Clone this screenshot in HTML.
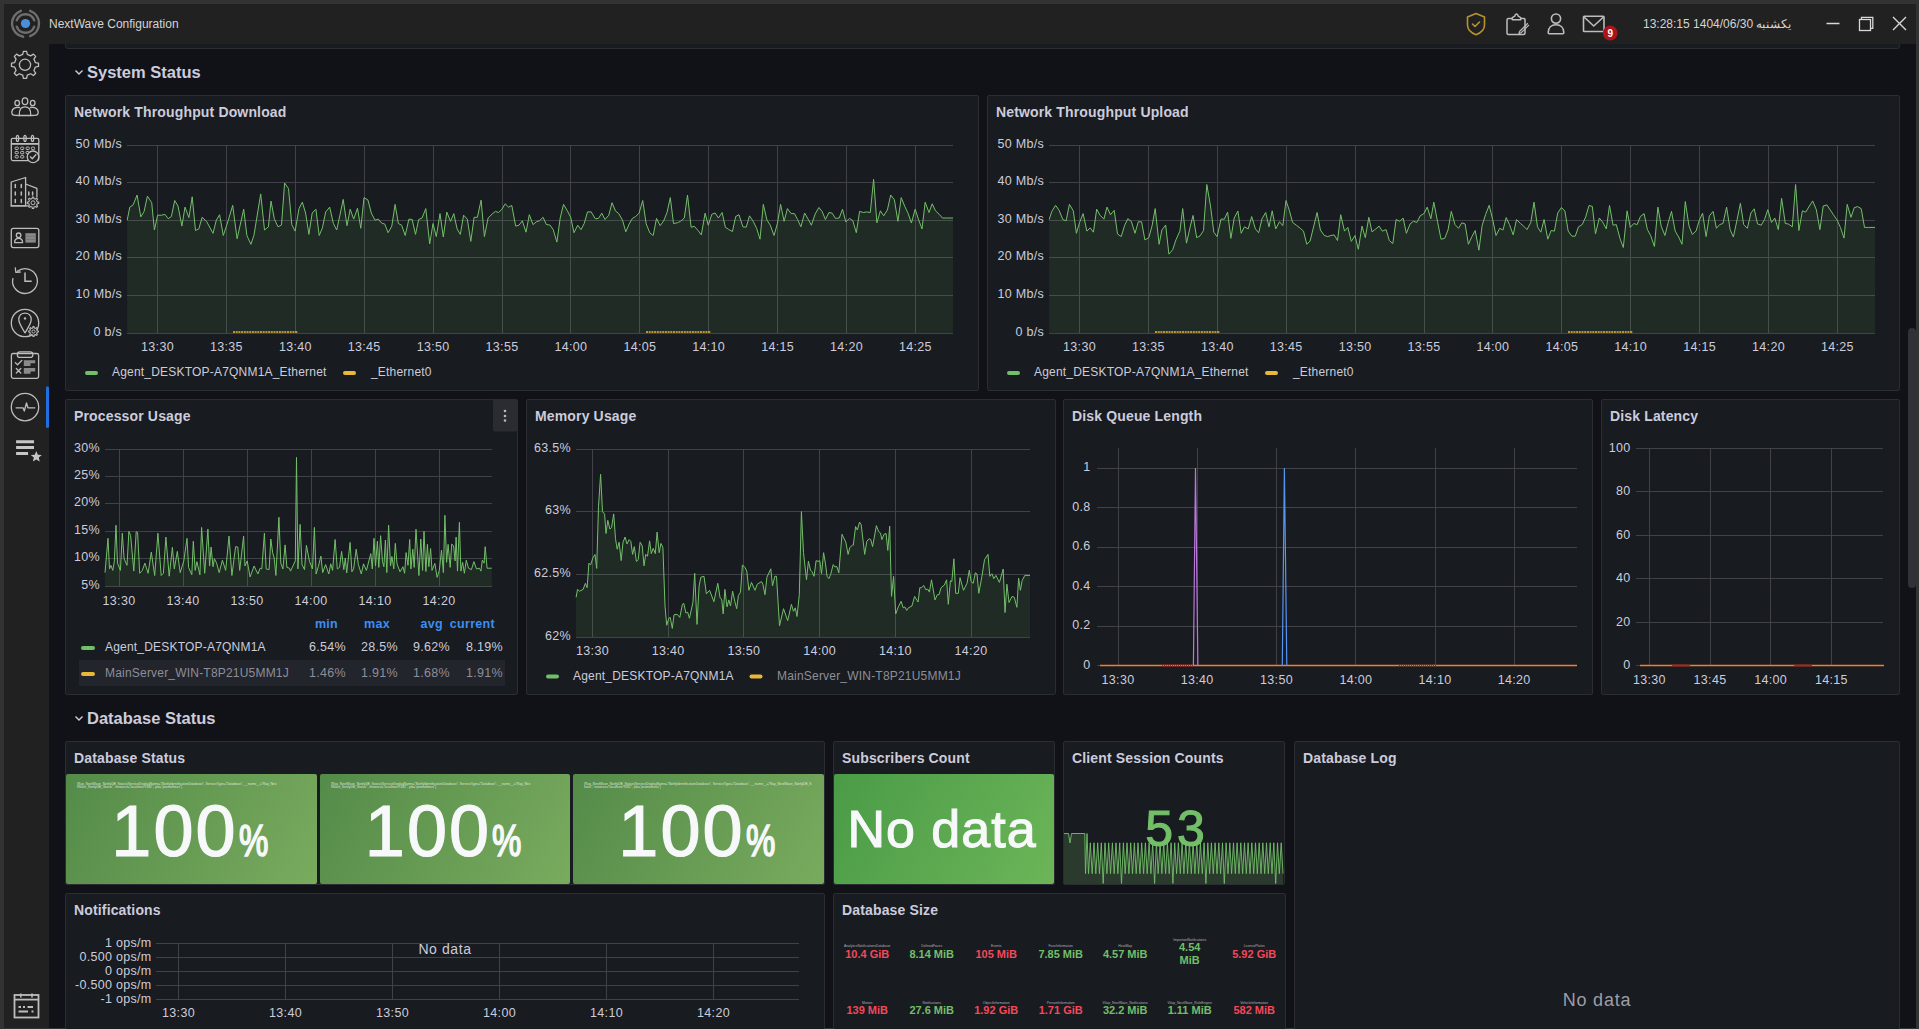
<!DOCTYPE html><html><head><meta charset="utf-8"><style>
html,body{margin:0;padding:0;}
body{width:1919px;height:1029px;overflow:hidden;background:#333333;position:relative;font-family:"Liberation Sans", sans-serif;}
.a{position:absolute;}
.pn{position:absolute;box-sizing:border-box;background:#181b1f;border:1px solid #2b2d32;border-radius:2px;}
.pt{position:absolute;font-size:14px;font-weight:bold;color:#ccccdc;line-height:18px;white-space:nowrap;letter-spacing:0.15px}
svg{position:absolute;overflow:visible}
svg text{font-family:"Liberation Sans", sans-serif;}
</style></head><body>

<div class="a" style="left:4px;top:4px;width:1912px;height:40px;background:#212121"></div>
<div class="a" style="left:4px;top:44px;width:45px;height:984px;background:#212121"></div>
<div class="a" style="left:49px;top:44px;width:1867px;height:984px;background:#111217"></div>
<div class="pn" style="left:65px;top:20px;width:1835px;height:29px;border-radius:3px"></div>
<div class="a" style="left:49px;top:4px;width:1867px;height:40px;background:#212121"></div>
<div class="a" style="left:1908px;top:328px;width:8px;height:260px;background:#313237;border-radius:4px"></div>
<div class="a" style="left:49px;top:16px;font-size:12px;color:#d4d4d4;line-height:16px">NextWave Configuration</div>
<svg style="left:0;top:0" width="1919" height="1029" viewBox="0 0 1919 1029"><path d="M75.5 70.5 L79 74 L82.5 70.5" stroke="#ccccdc" stroke-width="1.4" fill="none"/></svg>
<div class="a" style="left:87px;top:62px;font-size:16.5px;font-weight:bold;color:#ccccdc;line-height:20px">System Status</div>
<svg style="left:0;top:0" width="1919" height="1029" viewBox="0 0 1919 1029"><path d="M75.5 716.5 L79 720 L82.5 716.5" stroke="#ccccdc" stroke-width="1.4" fill="none"/></svg>
<div class="a" style="left:87px;top:708px;font-size:16.5px;font-weight:bold;color:#ccccdc;line-height:20px">Database Status</div>
<div class="pn" style="left:65px;top:95px;width:914px;height:296px"></div>
<div class="pt" style="left:74px;top:103px">Network Throughput Download</div>
<div class="pn" style="left:987px;top:95px;width:913px;height:296px"></div>
<div class="pt" style="left:996px;top:103px">Network Throughput Upload</div>
<div class="pn" style="left:65px;top:399px;width:453px;height:296px"></div>
<div class="pt" style="left:74px;top:407px">Processor Usage</div>
<div class="pn" style="left:526px;top:399px;width:530px;height:296px"></div>
<div class="pt" style="left:535px;top:407px">Memory Usage</div>
<div class="pn" style="left:1063px;top:399px;width:530px;height:296px"></div>
<div class="pt" style="left:1072px;top:407px">Disk Queue Length</div>
<div class="pn" style="left:1601px;top:399px;width:299px;height:296px"></div>
<div class="pt" style="left:1610px;top:407px">Disk Latency</div>
<div class="pn" style="left:65px;top:741px;width:760px;height:144px"></div>
<div class="pt" style="left:74px;top:749px">Database Status</div>
<div class="pn" style="left:833px;top:741px;width:222px;height:144px"></div>
<div class="pt" style="left:842px;top:749px">Subscribers Count</div>
<div class="pn" style="left:1063px;top:741px;width:222px;height:144px"></div>
<div class="pt" style="left:1072px;top:749px">Client Session Counts</div>
<div class="pn" style="left:1294px;top:741px;width:606px;height:299px"></div>
<div class="pt" style="left:1303px;top:749px">Database Log</div>
<div class="pn" style="left:65px;top:893px;width:760px;height:147px"></div>
<div class="pt" style="left:74px;top:901px">Notifications</div>
<div class="pn" style="left:833px;top:893px;width:453px;height:147px"></div>
<div class="pt" style="left:842px;top:901px">Database Size</div>
<svg style="left:0;top:0" width="1919" height="1029" viewBox="0 0 1919 1029">
<path d="M127 145.5H953M127 182.5H953M127 220.5H953M127 257.5H953M127 295.5H953M127 333.5H953M157.5 145V333M226.5 145V333M295.5 145V333M364.5 145V333M433.5 145V333M502.5 145V333M570.5 145V333M639.5 145V333M708.5 145V333M777.5 145V333M846.5 145V333M915.5 145V333" stroke="#404247" stroke-width="1" fill="none"/>
<text x="122" y="148.4" font-size="12.5" text-anchor="end" fill="#ccccdc" font-weight="normal" letter-spacing="0.3">50 Mb/s</text>
<text x="122" y="185.4" font-size="12.5" text-anchor="end" fill="#ccccdc" font-weight="normal" letter-spacing="0.3">40 Mb/s</text>
<text x="122" y="223.4" font-size="12.5" text-anchor="end" fill="#ccccdc" font-weight="normal" letter-spacing="0.3">30 Mb/s</text>
<text x="122" y="260.4" font-size="12.5" text-anchor="end" fill="#ccccdc" font-weight="normal" letter-spacing="0.3">20 Mb/s</text>
<text x="122" y="298.4" font-size="12.5" text-anchor="end" fill="#ccccdc" font-weight="normal" letter-spacing="0.3">10 Mb/s</text>
<text x="122" y="336.4" font-size="12.5" text-anchor="end" fill="#ccccdc" font-weight="normal" letter-spacing="0.3">0 b/s</text>
<text x="157.5" y="350.5" font-size="12.5" text-anchor="middle" fill="#ccccdc" font-weight="normal" letter-spacing="0.3">13:30</text>
<text x="226.4" y="350.5" font-size="12.5" text-anchor="middle" fill="#ccccdc" font-weight="normal" letter-spacing="0.3">13:35</text>
<text x="295.3" y="350.5" font-size="12.5" text-anchor="middle" fill="#ccccdc" font-weight="normal" letter-spacing="0.3">13:40</text>
<text x="364.2" y="350.5" font-size="12.5" text-anchor="middle" fill="#ccccdc" font-weight="normal" letter-spacing="0.3">13:45</text>
<text x="433.1" y="350.5" font-size="12.5" text-anchor="middle" fill="#ccccdc" font-weight="normal" letter-spacing="0.3">13:50</text>
<text x="502" y="350.5" font-size="12.5" text-anchor="middle" fill="#ccccdc" font-weight="normal" letter-spacing="0.3">13:55</text>
<text x="570.9" y="350.5" font-size="12.5" text-anchor="middle" fill="#ccccdc" font-weight="normal" letter-spacing="0.3">14:00</text>
<text x="639.8" y="350.5" font-size="12.5" text-anchor="middle" fill="#ccccdc" font-weight="normal" letter-spacing="0.3">14:05</text>
<text x="708.7" y="350.5" font-size="12.5" text-anchor="middle" fill="#ccccdc" font-weight="normal" letter-spacing="0.3">14:10</text>
<text x="777.6" y="350.5" font-size="12.5" text-anchor="middle" fill="#ccccdc" font-weight="normal" letter-spacing="0.3">14:15</text>
<text x="846.5" y="350.5" font-size="12.5" text-anchor="middle" fill="#ccccdc" font-weight="normal" letter-spacing="0.3">14:20</text>
<text x="915.4" y="350.5" font-size="12.5" text-anchor="middle" fill="#ccccdc" font-weight="normal" letter-spacing="0.3">14:25</text>
<path d="M127.2 220.2 L129.8 207.1 L133.1 204.9 L137.1 195 L140.8 216.9 L144.1 211.4 L147.4 196.1 L151.7 202.7 L154.4 230 L157.6 215.2 L161.6 215.2 L164.9 214.3 L168.2 218.7 L171.4 216.5 L174.7 200.5 L178 206 L181.9 226.1 L185 207.1 L188.9 217.6 L192.2 196.8 L195.5 230.5 L198.8 228.9 L202.1 217.3 L206.5 221.3 L213 233.3 L216.3 220.2 L219.6 214.7 L223.3 235.5 L228.3 220.2 L232.7 205.3 L237.1 238.8 L243.7 209.2 L246.9 235.5 L250.9 244.3 L253.9 235.5 L260.7 193.9 L264.5 230 L268.4 226.8 L271 201.1 L274.3 218.7 L278 226.8 L281.5 225 L284.6 183 L288.5 188.5 L291.8 224.6 L295.1 231.1 L299 208.6 L302.3 202.2 L305.6 213 L308.9 234.4 L312.2 213 L315.9 209.2 L319.2 235.5 L322.4 227.8 L325.7 211.9 L329.7 207.1 L333.4 223.5 L336.7 230 L340 214.7 L343.2 199.4 L347 225.7 L350.2 209.2 L353.7 219.1 L357.5 208.2 L360.8 228.3 L364 197.6 L368 200.1 L371.3 213 L375 220.2 L378.3 219.1 L381.5 223 L384.8 224.1 L388.1 232.7 L391.8 226.1 L395.1 204.4 L398.4 223.5 L401.7 225.2 L405.2 235.5 L408.9 219.1 L412.2 219.5 L415.5 234.4 L418.7 219.5 L422 218 L425.8 208.6 L429.7 243.8 L433 223.5 L436.3 236.6 L440 213.6 L443.3 237 L446.8 212.1 L450.5 221.3 L453.8 213.6 L457.1 228.9 L460.3 234.4 L463.6 215.2 L467.3 219.1 L470.8 241.4 L474.1 217.3 L477.4 217.3 L481.1 200.1 L484.4 236.6 L488.1 218 L492.1 214.1 L495.4 211.4 L498.6 212.5 L501.9 209.2 L505.2 203.8 L508.5 207.1 L511.8 205.5 L515.7 226.1 L519 225.2 L522.3 220.8 L526 232.2 L529.3 214.7 L533 224.6 L536.5 221.7 L539.4 220.8 L543.1 217.3 L546.4 224.6 L549.9 225 L553.2 229.6 L556.9 242.1 L560.2 218 L563.5 204.4 L567.4 210.8 L570.7 217.3 L574 232.7 L577.7 225.2 L581 229.6 L584.2 223.5 L587.5 211.9 L591.2 211.9 L595.2 218.7 L598.5 218.4 L601.8 213.2 L605 219.5 L608.8 215.2 L612 202.7 L615.5 211 L618.8 213.6 L622.5 220.2 L625.8 231.8 L629.1 224.1 L632.4 218.4 L635.7 216.5 L639 213.2 L642.7 200.5 L646.2 223.9 L649.9 232.9 L653.2 235.5 L656.5 218.4 L660.2 225.7 L663.7 220.8 L667 212.5 L670.3 197.6 L673.5 223.5 L677.3 222.8 L680.5 221.3 L684.3 218 L687.5 195 L691.1 227.2 L694.3 226.3 L698.1 230.5 L701.3 234.9 L705.1 213.2 L708.3 225.2 L711.8 214.3 L715.1 213 L718.4 218 L722.1 212.5 L725.4 227.4 L728.7 229.4 L732.4 231.6 L735.7 216.5 L739 214.7 L742.9 226.8 L746.2 227.2 L749.5 215.8 L753.2 221.3 L756.7 228.5 L760 239.2 L763.3 204.4 L767 220.2 L770.3 225.2 L774 235.5 L777.3 223.9 L780.6 204.4 L784.1 221.3 L787.4 208.6 L791.1 213.6 L794.4 213.6 L797.6 219.5 L800.9 226.8 L804.6 213 L808.1 219.1 L811.4 225.2 L815.1 214.1 L818.9 207.5 L822.1 211.4 L825.4 219.5 L828.9 212.5 L832.2 213.2 L835.5 218.4 L839.2 218 L842.5 209.2 L845.8 221.9 L849.5 218.4 L852.8 220.6 L856.3 232.7 L859.6 211.4 L863.3 212.5 L866.6 211.9 L870.3 212.5 L873.6 179.3 L876.9 222.8 L880.4 210.8 L883.7 215.8 L887.4 209.9 L890.7 195 L894.4 199.8 L897.9 221.3 L901.2 197.6 L904.9 206.6 L908.2 213.6 L911.4 223 L915.2 209.2 L918.4 219.1 L922 228.9 L925.2 202.2 L929 212.5 L932.2 203.8 L935.5 210.8 L939.2 214.3 L942.5 218 L946.5 218 L953 218 L953 333 L127.2 333 Z" fill="#73bf69" fill-opacity="0.1" stroke="none"/>
<path d="M127.2 220.2 L129.8 207.1 L133.1 204.9 L137.1 195 L140.8 216.9 L144.1 211.4 L147.4 196.1 L151.7 202.7 L154.4 230 L157.6 215.2 L161.6 215.2 L164.9 214.3 L168.2 218.7 L171.4 216.5 L174.7 200.5 L178 206 L181.9 226.1 L185 207.1 L188.9 217.6 L192.2 196.8 L195.5 230.5 L198.8 228.9 L202.1 217.3 L206.5 221.3 L213 233.3 L216.3 220.2 L219.6 214.7 L223.3 235.5 L228.3 220.2 L232.7 205.3 L237.1 238.8 L243.7 209.2 L246.9 235.5 L250.9 244.3 L253.9 235.5 L260.7 193.9 L264.5 230 L268.4 226.8 L271 201.1 L274.3 218.7 L278 226.8 L281.5 225 L284.6 183 L288.5 188.5 L291.8 224.6 L295.1 231.1 L299 208.6 L302.3 202.2 L305.6 213 L308.9 234.4 L312.2 213 L315.9 209.2 L319.2 235.5 L322.4 227.8 L325.7 211.9 L329.7 207.1 L333.4 223.5 L336.7 230 L340 214.7 L343.2 199.4 L347 225.7 L350.2 209.2 L353.7 219.1 L357.5 208.2 L360.8 228.3 L364 197.6 L368 200.1 L371.3 213 L375 220.2 L378.3 219.1 L381.5 223 L384.8 224.1 L388.1 232.7 L391.8 226.1 L395.1 204.4 L398.4 223.5 L401.7 225.2 L405.2 235.5 L408.9 219.1 L412.2 219.5 L415.5 234.4 L418.7 219.5 L422 218 L425.8 208.6 L429.7 243.8 L433 223.5 L436.3 236.6 L440 213.6 L443.3 237 L446.8 212.1 L450.5 221.3 L453.8 213.6 L457.1 228.9 L460.3 234.4 L463.6 215.2 L467.3 219.1 L470.8 241.4 L474.1 217.3 L477.4 217.3 L481.1 200.1 L484.4 236.6 L488.1 218 L492.1 214.1 L495.4 211.4 L498.6 212.5 L501.9 209.2 L505.2 203.8 L508.5 207.1 L511.8 205.5 L515.7 226.1 L519 225.2 L522.3 220.8 L526 232.2 L529.3 214.7 L533 224.6 L536.5 221.7 L539.4 220.8 L543.1 217.3 L546.4 224.6 L549.9 225 L553.2 229.6 L556.9 242.1 L560.2 218 L563.5 204.4 L567.4 210.8 L570.7 217.3 L574 232.7 L577.7 225.2 L581 229.6 L584.2 223.5 L587.5 211.9 L591.2 211.9 L595.2 218.7 L598.5 218.4 L601.8 213.2 L605 219.5 L608.8 215.2 L612 202.7 L615.5 211 L618.8 213.6 L622.5 220.2 L625.8 231.8 L629.1 224.1 L632.4 218.4 L635.7 216.5 L639 213.2 L642.7 200.5 L646.2 223.9 L649.9 232.9 L653.2 235.5 L656.5 218.4 L660.2 225.7 L663.7 220.8 L667 212.5 L670.3 197.6 L673.5 223.5 L677.3 222.8 L680.5 221.3 L684.3 218 L687.5 195 L691.1 227.2 L694.3 226.3 L698.1 230.5 L701.3 234.9 L705.1 213.2 L708.3 225.2 L711.8 214.3 L715.1 213 L718.4 218 L722.1 212.5 L725.4 227.4 L728.7 229.4 L732.4 231.6 L735.7 216.5 L739 214.7 L742.9 226.8 L746.2 227.2 L749.5 215.8 L753.2 221.3 L756.7 228.5 L760 239.2 L763.3 204.4 L767 220.2 L770.3 225.2 L774 235.5 L777.3 223.9 L780.6 204.4 L784.1 221.3 L787.4 208.6 L791.1 213.6 L794.4 213.6 L797.6 219.5 L800.9 226.8 L804.6 213 L808.1 219.1 L811.4 225.2 L815.1 214.1 L818.9 207.5 L822.1 211.4 L825.4 219.5 L828.9 212.5 L832.2 213.2 L835.5 218.4 L839.2 218 L842.5 209.2 L845.8 221.9 L849.5 218.4 L852.8 220.6 L856.3 232.7 L859.6 211.4 L863.3 212.5 L866.6 211.9 L870.3 212.5 L873.6 179.3 L876.9 222.8 L880.4 210.8 L883.7 215.8 L887.4 209.9 L890.7 195 L894.4 199.8 L897.9 221.3 L901.2 197.6 L904.9 206.6 L908.2 213.6 L911.4 223 L915.2 209.2 L918.4 219.1 L922 228.9 L925.2 202.2 L929 212.5 L932.2 203.8 L935.5 210.8 L939.2 214.3 L942.5 218 L946.5 218 L953 218" stroke="#73bf69" stroke-width="1" fill="none" stroke-linejoin="round"/>
<path d="M233 332H298" stroke="#eab839" stroke-width="1.3" stroke-dasharray="2 0.7"/>
<path d="M646 332H711" stroke="#eab839" stroke-width="1.3" stroke-dasharray="2 0.7"/>
<rect x="85" y="371" width="13" height="4" rx="2" fill="#73bf69"/>
<text x="112" y="376" font-size="12" text-anchor="start" fill="#ccccdc" font-weight="normal" letter-spacing="0.2">Agent_DESKTOP-A7QNM1A_Ethernet</text>
<rect x="343" y="371" width="13" height="4" rx="2" fill="#eab839"/>
<text x="371" y="376" font-size="12" text-anchor="start" fill="#ccccdc" font-weight="normal" letter-spacing="0.2">_Ethernet0</text>
<path d="M1049 145.5H1875M1049 182.5H1875M1049 220.5H1875M1049 257.5H1875M1049 295.5H1875M1049 333.5H1875M1079.5 145V333M1148.5 145V333M1217.5 145V333M1286.5 145V333M1355.5 145V333M1424.5 145V333M1492.5 145V333M1561.5 145V333M1630.5 145V333M1699.5 145V333M1768.5 145V333M1837.5 145V333" stroke="#404247" stroke-width="1" fill="none"/>
<text x="1044" y="148.4" font-size="12.5" text-anchor="end" fill="#ccccdc" font-weight="normal" letter-spacing="0.3">50 Mb/s</text>
<text x="1044" y="185.4" font-size="12.5" text-anchor="end" fill="#ccccdc" font-weight="normal" letter-spacing="0.3">40 Mb/s</text>
<text x="1044" y="223.4" font-size="12.5" text-anchor="end" fill="#ccccdc" font-weight="normal" letter-spacing="0.3">30 Mb/s</text>
<text x="1044" y="260.4" font-size="12.5" text-anchor="end" fill="#ccccdc" font-weight="normal" letter-spacing="0.3">20 Mb/s</text>
<text x="1044" y="298.4" font-size="12.5" text-anchor="end" fill="#ccccdc" font-weight="normal" letter-spacing="0.3">10 Mb/s</text>
<text x="1044" y="336.4" font-size="12.5" text-anchor="end" fill="#ccccdc" font-weight="normal" letter-spacing="0.3">0 b/s</text>
<text x="1079.5" y="350.5" font-size="12.5" text-anchor="middle" fill="#ccccdc" font-weight="normal" letter-spacing="0.3">13:30</text>
<text x="1148.4" y="350.5" font-size="12.5" text-anchor="middle" fill="#ccccdc" font-weight="normal" letter-spacing="0.3">13:35</text>
<text x="1217.3" y="350.5" font-size="12.5" text-anchor="middle" fill="#ccccdc" font-weight="normal" letter-spacing="0.3">13:40</text>
<text x="1286.2" y="350.5" font-size="12.5" text-anchor="middle" fill="#ccccdc" font-weight="normal" letter-spacing="0.3">13:45</text>
<text x="1355.1" y="350.5" font-size="12.5" text-anchor="middle" fill="#ccccdc" font-weight="normal" letter-spacing="0.3">13:50</text>
<text x="1424" y="350.5" font-size="12.5" text-anchor="middle" fill="#ccccdc" font-weight="normal" letter-spacing="0.3">13:55</text>
<text x="1492.9" y="350.5" font-size="12.5" text-anchor="middle" fill="#ccccdc" font-weight="normal" letter-spacing="0.3">14:00</text>
<text x="1561.8" y="350.5" font-size="12.5" text-anchor="middle" fill="#ccccdc" font-weight="normal" letter-spacing="0.3">14:05</text>
<text x="1630.7" y="350.5" font-size="12.5" text-anchor="middle" fill="#ccccdc" font-weight="normal" letter-spacing="0.3">14:10</text>
<text x="1699.6" y="350.5" font-size="12.5" text-anchor="middle" fill="#ccccdc" font-weight="normal" letter-spacing="0.3">14:15</text>
<text x="1768.5" y="350.5" font-size="12.5" text-anchor="middle" fill="#ccccdc" font-weight="normal" letter-spacing="0.3">14:20</text>
<text x="1837.4" y="350.5" font-size="12.5" text-anchor="middle" fill="#ccccdc" font-weight="normal" letter-spacing="0.3">14:25</text>
<path d="M1049.2 219.5 L1051.8 211.4 L1055.6 205.3 L1059.1 210.3 L1062.8 219.5 L1066.1 220.8 L1069.4 204.4 L1073.3 210.8 L1076.4 233.3 L1079.6 222.4 L1083.1 213.6 L1086.9 231.1 L1090.2 227.8 L1093.4 232.2 L1096.7 209.2 L1100 215.2 L1103.9 219.1 L1107 207.1 L1110.5 214.7 L1114.2 210.3 L1117.5 234 L1121.2 236.6 L1124.7 225.2 L1127.8 218.7 L1131.3 221.3 L1135 233.3 L1138.3 221.7 L1141.6 221.9 L1144.9 239.9 L1148.8 237.7 L1152.1 225.7 L1155.2 208.6 L1159.1 244.3 L1161.9 230 L1165.7 225 L1168.9 254.1 L1172.7 249.7 L1175.9 239.9 L1179.9 231.1 L1182.7 208.6 L1186.5 243.2 L1190.2 226.8 L1193 215.4 L1196.7 237.7 L1200 235.9 L1203.5 230.5 L1206.8 184.5 L1210.5 206 L1213.8 232.2 L1217.1 236.6 L1221 219.1 L1224.3 219.1 L1227.6 212.1 L1230.9 238.4 L1234.2 218 L1237.9 211 L1241.2 233.3 L1244.4 226.8 L1248.2 228.9 L1251.7 216.5 L1255.4 228.9 L1258.7 232.7 L1262 218.7 L1265.7 212.5 L1269 226.8 L1272.2 210.8 L1275.7 228.9 L1279.5 221.7 L1282.8 225.7 L1286 200.5 L1289.3 210.3 L1292.6 222.4 L1296.3 225.2 L1300.3 228.3 L1303.5 231.1 L1306.8 244.3 L1310.1 241 L1317.1 212.5 L1320.4 230 L1324.3 235.5 L1327.6 236.6 L1330.9 235.5 L1334.2 234.9 L1337.5 240.5 L1340.7 214.7 L1344.5 231.1 L1347.8 227.4 L1351.3 241.4 L1355 235.5 L1358.3 249.3 L1362 226.1 L1365.3 237.7 L1368.8 217.3 L1372 231.8 L1375.8 228.9 L1379.1 226.1 L1382.3 231.1 L1386.1 229.6 L1389.3 240.5 L1392.8 243.6 L1396.1 219.5 L1399.8 221.3 L1403.1 218 L1406.4 233.3 L1410.1 223.9 L1413.4 221.3 L1416.9 222.4 L1420.2 215.8 L1423.9 213.6 L1427.2 207.1 L1430.9 218.7 L1433.8 202.2 L1437.7 222.4 L1441 239.2 L1444.7 238.4 L1448 230 L1451.3 211.4 L1455 224.6 L1458.5 228.3 L1461.8 222.8 L1465.1 223.9 L1468.4 244.3 L1471.9 236.6 L1475.2 230.5 L1478.9 250.2 L1482.2 225.2 L1485.5 214.7 L1489.2 205.3 L1492.7 219.5 L1496 235.5 L1499.7 228.3 L1503 230 L1506.2 217.6 L1509.5 224.6 L1513.2 234.9 L1516.5 219.5 L1520.5 223.5 L1523.8 226.3 L1527 229.6 L1530.8 222.4 L1534 202.2 L1537.5 226.8 L1540.8 232.2 L1544.1 219.5 L1547.8 239.2 L1551.1 230.5 L1554.4 231.1 L1557.7 213 L1561.4 207.5 L1564.9 211 L1568.2 231.1 L1571.9 236.2 L1575.2 236.2 L1578.5 226.8 L1582.2 224.6 L1585.7 216.9 L1589 205.5 L1592.3 206.4 L1595.5 233.8 L1599.3 218 L1602.5 221.9 L1606.3 228.9 L1609.5 205.5 L1613.1 225.2 L1616.3 224.6 L1620.1 238.8 L1623.3 247.5 L1627.1 210.8 L1630.3 227.4 L1633.8 223.5 L1637.1 224.6 L1640.4 216.5 L1644.1 213.6 L1647.4 229.6 L1650.7 235.5 L1654.4 246.5 L1657.9 207.1 L1661.2 226.1 L1664.9 235.5 L1668.2 222.4 L1671.5 211.4 L1675.2 231.1 L1678.7 237 L1682 244.3 L1685.3 201.6 L1689 226.1 L1692.3 234.4 L1696 231.1 L1699.3 220.2 L1702.6 213.2 L1706.1 236.6 L1709.4 215.8 L1713.1 211.4 L1716.4 228.3 L1719.6 224.6 L1722.9 223.5 L1726.6 207.1 L1730.1 229.6 L1733.4 237 L1737.1 219.5 L1740.4 203.3 L1743.7 224.6 L1747.4 228.3 L1750.9 213 L1754.2 208.8 L1757.5 223.9 L1761.2 225.2 L1764.5 219.5 L1767.8 209.7 L1771.5 222.4 L1774.8 218 L1778.3 229.6 L1781.6 198.3 L1785.3 223.5 L1788.6 224.1 L1792.3 226.8 L1795.6 184.5 L1798.9 230.5 L1802.4 210.8 L1805.7 212.1 L1809.4 206 L1812.7 200.9 L1816.4 209.9 L1819.9 229.6 L1823.2 206 L1826.9 204.9 L1830.2 209.9 L1833.4 214.7 L1837.2 220.2 L1840.4 227.4 L1844 238.1 L1847.2 204.4 L1851 217.3 L1854.2 207.7 L1857.5 206.6 L1861.2 208.6 L1864.5 227.4 L1868.5 227.4 L1875 227.4 L1875 333 L1049.2 333 Z" fill="#73bf69" fill-opacity="0.1" stroke="none"/>
<path d="M1049.2 219.5 L1051.8 211.4 L1055.6 205.3 L1059.1 210.3 L1062.8 219.5 L1066.1 220.8 L1069.4 204.4 L1073.3 210.8 L1076.4 233.3 L1079.6 222.4 L1083.1 213.6 L1086.9 231.1 L1090.2 227.8 L1093.4 232.2 L1096.7 209.2 L1100 215.2 L1103.9 219.1 L1107 207.1 L1110.5 214.7 L1114.2 210.3 L1117.5 234 L1121.2 236.6 L1124.7 225.2 L1127.8 218.7 L1131.3 221.3 L1135 233.3 L1138.3 221.7 L1141.6 221.9 L1144.9 239.9 L1148.8 237.7 L1152.1 225.7 L1155.2 208.6 L1159.1 244.3 L1161.9 230 L1165.7 225 L1168.9 254.1 L1172.7 249.7 L1175.9 239.9 L1179.9 231.1 L1182.7 208.6 L1186.5 243.2 L1190.2 226.8 L1193 215.4 L1196.7 237.7 L1200 235.9 L1203.5 230.5 L1206.8 184.5 L1210.5 206 L1213.8 232.2 L1217.1 236.6 L1221 219.1 L1224.3 219.1 L1227.6 212.1 L1230.9 238.4 L1234.2 218 L1237.9 211 L1241.2 233.3 L1244.4 226.8 L1248.2 228.9 L1251.7 216.5 L1255.4 228.9 L1258.7 232.7 L1262 218.7 L1265.7 212.5 L1269 226.8 L1272.2 210.8 L1275.7 228.9 L1279.5 221.7 L1282.8 225.7 L1286 200.5 L1289.3 210.3 L1292.6 222.4 L1296.3 225.2 L1300.3 228.3 L1303.5 231.1 L1306.8 244.3 L1310.1 241 L1317.1 212.5 L1320.4 230 L1324.3 235.5 L1327.6 236.6 L1330.9 235.5 L1334.2 234.9 L1337.5 240.5 L1340.7 214.7 L1344.5 231.1 L1347.8 227.4 L1351.3 241.4 L1355 235.5 L1358.3 249.3 L1362 226.1 L1365.3 237.7 L1368.8 217.3 L1372 231.8 L1375.8 228.9 L1379.1 226.1 L1382.3 231.1 L1386.1 229.6 L1389.3 240.5 L1392.8 243.6 L1396.1 219.5 L1399.8 221.3 L1403.1 218 L1406.4 233.3 L1410.1 223.9 L1413.4 221.3 L1416.9 222.4 L1420.2 215.8 L1423.9 213.6 L1427.2 207.1 L1430.9 218.7 L1433.8 202.2 L1437.7 222.4 L1441 239.2 L1444.7 238.4 L1448 230 L1451.3 211.4 L1455 224.6 L1458.5 228.3 L1461.8 222.8 L1465.1 223.9 L1468.4 244.3 L1471.9 236.6 L1475.2 230.5 L1478.9 250.2 L1482.2 225.2 L1485.5 214.7 L1489.2 205.3 L1492.7 219.5 L1496 235.5 L1499.7 228.3 L1503 230 L1506.2 217.6 L1509.5 224.6 L1513.2 234.9 L1516.5 219.5 L1520.5 223.5 L1523.8 226.3 L1527 229.6 L1530.8 222.4 L1534 202.2 L1537.5 226.8 L1540.8 232.2 L1544.1 219.5 L1547.8 239.2 L1551.1 230.5 L1554.4 231.1 L1557.7 213 L1561.4 207.5 L1564.9 211 L1568.2 231.1 L1571.9 236.2 L1575.2 236.2 L1578.5 226.8 L1582.2 224.6 L1585.7 216.9 L1589 205.5 L1592.3 206.4 L1595.5 233.8 L1599.3 218 L1602.5 221.9 L1606.3 228.9 L1609.5 205.5 L1613.1 225.2 L1616.3 224.6 L1620.1 238.8 L1623.3 247.5 L1627.1 210.8 L1630.3 227.4 L1633.8 223.5 L1637.1 224.6 L1640.4 216.5 L1644.1 213.6 L1647.4 229.6 L1650.7 235.5 L1654.4 246.5 L1657.9 207.1 L1661.2 226.1 L1664.9 235.5 L1668.2 222.4 L1671.5 211.4 L1675.2 231.1 L1678.7 237 L1682 244.3 L1685.3 201.6 L1689 226.1 L1692.3 234.4 L1696 231.1 L1699.3 220.2 L1702.6 213.2 L1706.1 236.6 L1709.4 215.8 L1713.1 211.4 L1716.4 228.3 L1719.6 224.6 L1722.9 223.5 L1726.6 207.1 L1730.1 229.6 L1733.4 237 L1737.1 219.5 L1740.4 203.3 L1743.7 224.6 L1747.4 228.3 L1750.9 213 L1754.2 208.8 L1757.5 223.9 L1761.2 225.2 L1764.5 219.5 L1767.8 209.7 L1771.5 222.4 L1774.8 218 L1778.3 229.6 L1781.6 198.3 L1785.3 223.5 L1788.6 224.1 L1792.3 226.8 L1795.6 184.5 L1798.9 230.5 L1802.4 210.8 L1805.7 212.1 L1809.4 206 L1812.7 200.9 L1816.4 209.9 L1819.9 229.6 L1823.2 206 L1826.9 204.9 L1830.2 209.9 L1833.4 214.7 L1837.2 220.2 L1840.4 227.4 L1844 238.1 L1847.2 204.4 L1851 217.3 L1854.2 207.7 L1857.5 206.6 L1861.2 208.6 L1864.5 227.4 L1868.5 227.4 L1875 227.4" stroke="#73bf69" stroke-width="1" fill="none" stroke-linejoin="round"/>
<path d="M1155 332H1220" stroke="#eab839" stroke-width="1.3" stroke-dasharray="2 0.7"/>
<path d="M1568 332H1633" stroke="#eab839" stroke-width="1.3" stroke-dasharray="2 0.7"/>
<rect x="1007" y="371" width="13" height="4" rx="2" fill="#73bf69"/>
<text x="1034" y="376" font-size="12" text-anchor="start" fill="#ccccdc" font-weight="normal" letter-spacing="0.2">Agent_DESKTOP-A7QNM1A_Ethernet</text>
<rect x="1265" y="371" width="13" height="4" rx="2" fill="#eab839"/>
<text x="1293" y="376" font-size="12" text-anchor="start" fill="#ccccdc" font-weight="normal" letter-spacing="0.2">_Ethernet0</text>
<path d="M105 449.5H492M105 476.5H492M105 503.5H492M105 531.5H492M105 558.5H492M105 586.5H492M119.5 449V586M183.5 449V586M247.5 449V586M311.5 449V586M375.5 449V586M439.5 449V586" stroke="#404247" stroke-width="1" fill="none"/>
<text x="100" y="452.4" font-size="12.5" text-anchor="end" fill="#ccccdc" font-weight="normal" letter-spacing="0.3">30%</text>
<text x="100" y="479.4" font-size="12.5" text-anchor="end" fill="#ccccdc" font-weight="normal" letter-spacing="0.3">25%</text>
<text x="100" y="506.4" font-size="12.5" text-anchor="end" fill="#ccccdc" font-weight="normal" letter-spacing="0.3">20%</text>
<text x="100" y="534.4" font-size="12.5" text-anchor="end" fill="#ccccdc" font-weight="normal" letter-spacing="0.3">15%</text>
<text x="100" y="561.4" font-size="12.5" text-anchor="end" fill="#ccccdc" font-weight="normal" letter-spacing="0.3">10%</text>
<text x="100" y="589.4" font-size="12.5" text-anchor="end" fill="#ccccdc" font-weight="normal" letter-spacing="0.3">5%</text>
<text x="119" y="604.5" font-size="12.5" text-anchor="middle" fill="#ccccdc" font-weight="normal" letter-spacing="0.3">13:30</text>
<text x="183" y="604.5" font-size="12.5" text-anchor="middle" fill="#ccccdc" font-weight="normal" letter-spacing="0.3">13:40</text>
<text x="247" y="604.5" font-size="12.5" text-anchor="middle" fill="#ccccdc" font-weight="normal" letter-spacing="0.3">13:50</text>
<text x="311" y="604.5" font-size="12.5" text-anchor="middle" fill="#ccccdc" font-weight="normal" letter-spacing="0.3">14:00</text>
<text x="375" y="604.5" font-size="12.5" text-anchor="middle" fill="#ccccdc" font-weight="normal" letter-spacing="0.3">14:10</text>
<text x="439" y="604.5" font-size="12.5" text-anchor="middle" fill="#ccccdc" font-weight="normal" letter-spacing="0.3">14:20</text>
<path d="M105 572.6 L108 538.3 L109.5 568.9 L110.9 565.3 L112.8 570.4 L114.3 561.6 L116 525.2 L117.5 563.1 L120.4 570.4 L122.3 533.2 L124.1 558.7 L127 565.3 L128.9 531.3 L130.6 535.4 L133.8 571.1 L136.2 531.7 L137.6 532.5 L139.7 573.3 L142.3 570.4 L144.9 563.1 L148.1 573.3 L151.3 552.1 L154.7 575.5 L157.9 533.2 L161.2 575.5 L163.4 573.3 L165.9 537.1 L169.2 576.2 L172.4 547.3 L174.3 568.9 L177.3 551.4 L180.2 572.6 L183.8 560.9 L187 538.3 L188.6 567.4 L191.8 574.7 L193.3 541.2 L195.2 570.4 L196.9 561.6 L199.9 574.7 L201.6 527.4 L204.7 573.3 L207.9 529.1 L209.6 566 L211.1 547 L213 566.7 L214.4 558.7 L216.6 563.1 L219.2 572.6 L222.4 560.2 L225.7 570.4 L229 536.1 L231.9 575.5 L235.6 546.7 L237.8 547 L239.7 570.4 L243.6 536.1 L245 566 L247.2 560.9 L250.1 576.9 L254.1 566 L257.9 574 L260.1 568.2 L261.8 568.9 L264.4 533.2 L266.2 568.9 L269.1 569.6 L270.8 539 L272.7 552.9 L274.2 558 L275.9 575.5 L278.9 517.2 L280.8 563.1 L282.9 568.9 L285.1 544.9 L286.9 567.4 L289.5 568.2 L290.5 571.1 L295.3 560.9 L296.5 457.4 L297.9 568.9 L300.1 524.4 L302 564.5 L304.5 569.6 L306.4 545.3 L309.6 561.6 L312.5 568.9 L314.4 527.4 L316.1 574 L318.3 566.7 L320.9 556.1 L322.7 572.6 L325.6 564.5 L328.8 574 L330.7 563.8 L332.6 570.4 L335.1 539.5 L337.3 568.9 L339.5 567.4 L341.6 551.4 L343.8 569.6 L345.3 558 L346.7 573 L350.1 542.4 L351.9 571.8 L353.6 568.9 L356.2 549.2 L358.4 564.5 L361.3 574 L363.5 563.8 L366.4 570.4 L370.8 553.6 L372.3 568.9 L374 538.3 L375.5 566 L377.4 541.2 L378.8 567.4 L380.6 535.7 L382.5 561.6 L383.9 566.7 L385.4 540 L386.8 572.6 L388.6 525.2 L390.5 566 L391.9 556.5 L393.8 568.9 L395.3 543.4 L397 563.8 L400 571.8 L402.9 566.7 L404.6 573.3 L406.1 552.6 L408 565.3 L409.7 539.5 L410.9 568.9 L412.8 549.2 L414.2 567.4 L416 529.3 L418.9 575.5 L420.8 539 L422.6 570.4 L424 531.3 L425.9 571.5 L427.4 544.4 L428.8 566.7 L430.6 548.5 L432 570.4 L434.9 563.4 L437.1 577.4 L439.3 570.4 L441.5 550 L443.4 572.6 L444.9 515.3 L446.6 562.3 L448.1 544.4 L450.2 567.4 L451.7 544.1 L453.6 545.6 L455.1 560.9 L456.1 537.1 L457.5 571.1 L459.4 522.3 L460.9 571.1 L462.6 562.3 L464.4 573.3 L466.3 560.2 L468.5 568.2 L471.4 569.6 L473.9 561.6 L476.5 568.9 L479.4 568.2 L480.9 571.1 L482.3 560.2 L484.1 563.1 L485.2 546.7 L487.1 568.2 L491.8 568.2 L491.8 586.5 L105 586.5 Z" fill="#73bf69" fill-opacity="0.1" stroke="none"/>
<path d="M105 572.6 L108 538.3 L109.5 568.9 L110.9 565.3 L112.8 570.4 L114.3 561.6 L116 525.2 L117.5 563.1 L120.4 570.4 L122.3 533.2 L124.1 558.7 L127 565.3 L128.9 531.3 L130.6 535.4 L133.8 571.1 L136.2 531.7 L137.6 532.5 L139.7 573.3 L142.3 570.4 L144.9 563.1 L148.1 573.3 L151.3 552.1 L154.7 575.5 L157.9 533.2 L161.2 575.5 L163.4 573.3 L165.9 537.1 L169.2 576.2 L172.4 547.3 L174.3 568.9 L177.3 551.4 L180.2 572.6 L183.8 560.9 L187 538.3 L188.6 567.4 L191.8 574.7 L193.3 541.2 L195.2 570.4 L196.9 561.6 L199.9 574.7 L201.6 527.4 L204.7 573.3 L207.9 529.1 L209.6 566 L211.1 547 L213 566.7 L214.4 558.7 L216.6 563.1 L219.2 572.6 L222.4 560.2 L225.7 570.4 L229 536.1 L231.9 575.5 L235.6 546.7 L237.8 547 L239.7 570.4 L243.6 536.1 L245 566 L247.2 560.9 L250.1 576.9 L254.1 566 L257.9 574 L260.1 568.2 L261.8 568.9 L264.4 533.2 L266.2 568.9 L269.1 569.6 L270.8 539 L272.7 552.9 L274.2 558 L275.9 575.5 L278.9 517.2 L280.8 563.1 L282.9 568.9 L285.1 544.9 L286.9 567.4 L289.5 568.2 L290.5 571.1 L295.3 560.9 L296.5 457.4 L297.9 568.9 L300.1 524.4 L302 564.5 L304.5 569.6 L306.4 545.3 L309.6 561.6 L312.5 568.9 L314.4 527.4 L316.1 574 L318.3 566.7 L320.9 556.1 L322.7 572.6 L325.6 564.5 L328.8 574 L330.7 563.8 L332.6 570.4 L335.1 539.5 L337.3 568.9 L339.5 567.4 L341.6 551.4 L343.8 569.6 L345.3 558 L346.7 573 L350.1 542.4 L351.9 571.8 L353.6 568.9 L356.2 549.2 L358.4 564.5 L361.3 574 L363.5 563.8 L366.4 570.4 L370.8 553.6 L372.3 568.9 L374 538.3 L375.5 566 L377.4 541.2 L378.8 567.4 L380.6 535.7 L382.5 561.6 L383.9 566.7 L385.4 540 L386.8 572.6 L388.6 525.2 L390.5 566 L391.9 556.5 L393.8 568.9 L395.3 543.4 L397 563.8 L400 571.8 L402.9 566.7 L404.6 573.3 L406.1 552.6 L408 565.3 L409.7 539.5 L410.9 568.9 L412.8 549.2 L414.2 567.4 L416 529.3 L418.9 575.5 L420.8 539 L422.6 570.4 L424 531.3 L425.9 571.5 L427.4 544.4 L428.8 566.7 L430.6 548.5 L432 570.4 L434.9 563.4 L437.1 577.4 L439.3 570.4 L441.5 550 L443.4 572.6 L444.9 515.3 L446.6 562.3 L448.1 544.4 L450.2 567.4 L451.7 544.1 L453.6 545.6 L455.1 560.9 L456.1 537.1 L457.5 571.1 L459.4 522.3 L460.9 571.1 L462.6 562.3 L464.4 573.3 L466.3 560.2 L468.5 568.2 L471.4 569.6 L473.9 561.6 L476.5 568.9 L479.4 568.2 L480.9 571.1 L482.3 560.2 L484.1 563.1 L485.2 546.7 L487.1 568.2 L491.8 568.2" stroke="#73bf69" stroke-width="1" fill="none" stroke-linejoin="round"/>
<rect x="493" y="399.5" width="24.5" height="32" rx="2" fill="#2a2c31"/>
<circle cx="505" cy="411" r="1.3" fill="#b8b8c4"/>
<circle cx="505" cy="416" r="1.3" fill="#b8b8c4"/>
<circle cx="505" cy="420.5" r="1.3" fill="#b8b8c4"/>
<text x="338" y="628" font-size="12.5" text-anchor="end" fill="#3b8ef5" font-weight="bold" letter-spacing="0.3">min</text>
<text x="390" y="628" font-size="12.5" text-anchor="end" fill="#3b8ef5" font-weight="bold" letter-spacing="0.3">max</text>
<text x="443" y="628" font-size="12.5" text-anchor="end" fill="#3b8ef5" font-weight="bold" letter-spacing="0.3">avg</text>
<text x="495" y="628" font-size="12.5" text-anchor="end" fill="#3b8ef5" font-weight="bold" letter-spacing="0.3">current</text>
<rect x="79" y="660" width="426" height="26" fill="#22252b"/>
<rect x="81" y="646" width="14" height="4" rx="2" fill="#73bf69"/>
<rect x="81" y="672" width="14" height="4" rx="2" fill="#eab839"/>
<text x="105" y="651" font-size="12" text-anchor="start" fill="#ccccdc" font-weight="normal" letter-spacing="0.2">Agent_DESKTOP-A7QNM1A</text>
<text x="105" y="677" font-size="12" text-anchor="start" fill="#8e8e99" font-weight="normal" letter-spacing="0.2">MainServer_WIN-T8P21U5MM1J</text>
<text x="346" y="651" font-size="12.5" text-anchor="end" fill="#ccccdc" font-weight="normal" letter-spacing="0.3">6.54%</text>
<text x="398" y="651" font-size="12.5" text-anchor="end" fill="#ccccdc" font-weight="normal" letter-spacing="0.3">28.5%</text>
<text x="450" y="651" font-size="12.5" text-anchor="end" fill="#ccccdc" font-weight="normal" letter-spacing="0.3">9.62%</text>
<text x="503" y="651" font-size="12.5" text-anchor="end" fill="#ccccdc" font-weight="normal" letter-spacing="0.3">8.19%</text>
<text x="346" y="677" font-size="12.5" text-anchor="end" fill="#8e8e99" font-weight="normal" letter-spacing="0.3">1.46%</text>
<text x="398" y="677" font-size="12.5" text-anchor="end" fill="#8e8e99" font-weight="normal" letter-spacing="0.3">1.91%</text>
<text x="450" y="677" font-size="12.5" text-anchor="end" fill="#8e8e99" font-weight="normal" letter-spacing="0.3">1.68%</text>
<text x="503" y="677" font-size="12.5" text-anchor="end" fill="#8e8e99" font-weight="normal" letter-spacing="0.3">1.91%</text>
<path d="M576 449.5H1030M576 511.5H1030M576 574.5H1030M576 637.5H1030M592.5 449V637M668.5 449V637M743.5 449V637M819.5 449V637M895.5 449V637M971.5 449V637" stroke="#404247" stroke-width="1" fill="none"/>
<text x="571" y="452.4" font-size="12.5" text-anchor="end" fill="#ccccdc" font-weight="normal" letter-spacing="0.3">63.5%</text>
<text x="571" y="514.4" font-size="12.5" text-anchor="end" fill="#ccccdc" font-weight="normal" letter-spacing="0.3">63%</text>
<text x="571" y="577.4" font-size="12.5" text-anchor="end" fill="#ccccdc" font-weight="normal" letter-spacing="0.3">62.5%</text>
<text x="571" y="640.4" font-size="12.5" text-anchor="end" fill="#ccccdc" font-weight="normal" letter-spacing="0.3">62%</text>
<text x="592.5" y="654.5" font-size="12.5" text-anchor="middle" fill="#ccccdc" font-weight="normal" letter-spacing="0.3">13:30</text>
<text x="668.2" y="654.5" font-size="12.5" text-anchor="middle" fill="#ccccdc" font-weight="normal" letter-spacing="0.3">13:40</text>
<text x="743.9" y="654.5" font-size="12.5" text-anchor="middle" fill="#ccccdc" font-weight="normal" letter-spacing="0.3">13:50</text>
<text x="819.6" y="654.5" font-size="12.5" text-anchor="middle" fill="#ccccdc" font-weight="normal" letter-spacing="0.3">14:00</text>
<text x="895.3" y="654.5" font-size="12.5" text-anchor="middle" fill="#ccccdc" font-weight="normal" letter-spacing="0.3">14:10</text>
<text x="971" y="654.5" font-size="12.5" text-anchor="middle" fill="#ccccdc" font-weight="normal" letter-spacing="0.3">14:20</text>
<path d="M576.1 597.3 L577.5 589.4 L579.6 591.2 L583.1 589.4 L585.4 583.3 L587.1 587.7 L588.9 563.2 L590.6 564.9 L592.9 557.9 L595 554.4 L596.7 568.4 L598.5 506.3 L600.6 474.3 L602.5 511.6 L604.6 514.2 L606 533.5 L607.8 520.3 L609.9 529.1 L611.6 527.3 L613.7 513.9 L615.5 538.7 L617.2 549.2 L619.1 542.2 L621.2 560.6 L623 542.2 L625.1 537 L627 544 L629.1 539.6 L630.8 541.3 L632.6 554.4 L634.3 546.6 L636.4 561.4 L638.2 559.7 L640.1 542.2 L642.2 545.7 L644 565.8 L645.7 554.4 L647.5 556.2 L649.6 540.8 L651.3 553.6 L653.2 548.3 L655.3 553.6 L657.1 532.1 L659.2 552.7 L660.9 543.4 L662.9 547.5 L665 606 L666.7 625.3 L668.8 618.3 L670.2 617.4 L672.3 628.4 L674 614.8 L677.2 614.3 L679.8 617.4 L682.4 604.3 L683.8 603.4 L685.9 613 L687.7 612.2 L689.4 618.3 L692.9 602.5 L694.7 573.3 L697 624.4 L699.1 585.9 L700.8 577.2 L704 576.3 L706.4 593.8 L709.6 590.3 L713.9 601.7 L717.8 583.3 L720 597.3 L721.8 599.9 L723.2 613.9 L724.9 589.4 L727 606.9 L728.8 599.9 L730.5 606 L732.6 591.2 L734.9 601.7 L736.7 608.7 L738.4 595.6 L740.5 592.1 L742.4 564.9 L745.1 567.6 L746.8 571.1 L748.9 590.3 L751.5 582.4 L755 590.3 L757.3 584.2 L761.5 581.6 L762.9 584.2 L765 594.7 L766.9 577.2 L770.8 568.8 L772.5 585.9 L774.8 576.3 L776.5 576.3 L779.5 625.8 L783.5 608.7 L787.7 620.6 L791.4 604.3 L793.5 611.3 L795.3 607.8 L797 616.5 L799.3 594.7 L801.4 511.6 L803.5 552.7 L806.5 579.8 L808.4 561.1 L810.5 570.2 L812.2 571.9 L814 576.3 L816.1 560.6 L818 561.4 L819.8 560.6 L821.5 573.7 L823.6 552.7 L825.4 563.2 L827.1 576.3 L828.9 578.6 L830.6 574.6 L833.2 564.6 L835 567 L836.7 566.3 L838.8 572.8 L842 534.3 L843.7 537.8 L845.8 542.2 L848.1 554.4 L849.8 547.5 L852.5 545.2 L853.3 545.2 L855.6 526.5 L857.4 530 L859.5 522.1 L861.2 524.7 L864.7 554.4 L866.8 541.3 L869.1 538.7 L870.8 539.6 L872.6 546.6 L876.4 525.6 L878.7 531.7 L880.5 533.1 L881.9 539.6 L884 534.3 L886.1 533.5 L887.8 550.4 L889.7 526.1 L891.5 596.4 L893.6 576.3 L895.7 613.9 L898.3 606.9 L901.1 601.3 L903.2 607.8 L904.9 606.9 L906.7 610.4 L908.4 607.8 L911.9 606 L914.6 596.4 L918.1 602 L919.8 587.7 L921.6 587.7 L923.7 585.4 L925.9 589.8 L927.7 589.1 L929.4 592.1 L931.5 579.8 L935 599.9 L937.3 594.7 L939 594.7 L941.1 587.7 L944.3 585.1 L946.6 579.8 L948.3 604.3 L950.4 580.7 L951.8 581.6 L953.9 558.8 L955.7 593.3 L958.3 593.3 L960 577.7 L963.5 590.3 L967 583.3 L969.3 570.2 L971.1 581.6 L973.2 583.3 L975.3 572.8 L977 574 L978.8 593.3 L981.9 576.3 L984.5 559.7 L988 554.4 L989.8 576.3 L991.9 573.7 L993.8 578.6 L995.9 575.4 L999.4 582.4 L1003.2 569 L1005 612.5 L1006.9 584.2 L1009 602.5 L1012 596.4 L1014.3 597.3 L1016.9 607.3 L1018.6 578.1 L1020.4 590.3 L1022.1 580.7 L1024.8 575.4 L1030 575.4 L1030 637 L576.1 637 Z" fill="#73bf69" fill-opacity="0.1" stroke="none"/>
<path d="M576.1 597.3 L577.5 589.4 L579.6 591.2 L583.1 589.4 L585.4 583.3 L587.1 587.7 L588.9 563.2 L590.6 564.9 L592.9 557.9 L595 554.4 L596.7 568.4 L598.5 506.3 L600.6 474.3 L602.5 511.6 L604.6 514.2 L606 533.5 L607.8 520.3 L609.9 529.1 L611.6 527.3 L613.7 513.9 L615.5 538.7 L617.2 549.2 L619.1 542.2 L621.2 560.6 L623 542.2 L625.1 537 L627 544 L629.1 539.6 L630.8 541.3 L632.6 554.4 L634.3 546.6 L636.4 561.4 L638.2 559.7 L640.1 542.2 L642.2 545.7 L644 565.8 L645.7 554.4 L647.5 556.2 L649.6 540.8 L651.3 553.6 L653.2 548.3 L655.3 553.6 L657.1 532.1 L659.2 552.7 L660.9 543.4 L662.9 547.5 L665 606 L666.7 625.3 L668.8 618.3 L670.2 617.4 L672.3 628.4 L674 614.8 L677.2 614.3 L679.8 617.4 L682.4 604.3 L683.8 603.4 L685.9 613 L687.7 612.2 L689.4 618.3 L692.9 602.5 L694.7 573.3 L697 624.4 L699.1 585.9 L700.8 577.2 L704 576.3 L706.4 593.8 L709.6 590.3 L713.9 601.7 L717.8 583.3 L720 597.3 L721.8 599.9 L723.2 613.9 L724.9 589.4 L727 606.9 L728.8 599.9 L730.5 606 L732.6 591.2 L734.9 601.7 L736.7 608.7 L738.4 595.6 L740.5 592.1 L742.4 564.9 L745.1 567.6 L746.8 571.1 L748.9 590.3 L751.5 582.4 L755 590.3 L757.3 584.2 L761.5 581.6 L762.9 584.2 L765 594.7 L766.9 577.2 L770.8 568.8 L772.5 585.9 L774.8 576.3 L776.5 576.3 L779.5 625.8 L783.5 608.7 L787.7 620.6 L791.4 604.3 L793.5 611.3 L795.3 607.8 L797 616.5 L799.3 594.7 L801.4 511.6 L803.5 552.7 L806.5 579.8 L808.4 561.1 L810.5 570.2 L812.2 571.9 L814 576.3 L816.1 560.6 L818 561.4 L819.8 560.6 L821.5 573.7 L823.6 552.7 L825.4 563.2 L827.1 576.3 L828.9 578.6 L830.6 574.6 L833.2 564.6 L835 567 L836.7 566.3 L838.8 572.8 L842 534.3 L843.7 537.8 L845.8 542.2 L848.1 554.4 L849.8 547.5 L852.5 545.2 L853.3 545.2 L855.6 526.5 L857.4 530 L859.5 522.1 L861.2 524.7 L864.7 554.4 L866.8 541.3 L869.1 538.7 L870.8 539.6 L872.6 546.6 L876.4 525.6 L878.7 531.7 L880.5 533.1 L881.9 539.6 L884 534.3 L886.1 533.5 L887.8 550.4 L889.7 526.1 L891.5 596.4 L893.6 576.3 L895.7 613.9 L898.3 606.9 L901.1 601.3 L903.2 607.8 L904.9 606.9 L906.7 610.4 L908.4 607.8 L911.9 606 L914.6 596.4 L918.1 602 L919.8 587.7 L921.6 587.7 L923.7 585.4 L925.9 589.8 L927.7 589.1 L929.4 592.1 L931.5 579.8 L935 599.9 L937.3 594.7 L939 594.7 L941.1 587.7 L944.3 585.1 L946.6 579.8 L948.3 604.3 L950.4 580.7 L951.8 581.6 L953.9 558.8 L955.7 593.3 L958.3 593.3 L960 577.7 L963.5 590.3 L967 583.3 L969.3 570.2 L971.1 581.6 L973.2 583.3 L975.3 572.8 L977 574 L978.8 593.3 L981.9 576.3 L984.5 559.7 L988 554.4 L989.8 576.3 L991.9 573.7 L993.8 578.6 L995.9 575.4 L999.4 582.4 L1003.2 569 L1005 612.5 L1006.9 584.2 L1009 602.5 L1012 596.4 L1014.3 597.3 L1016.9 607.3 L1018.6 578.1 L1020.4 590.3 L1022.1 580.7 L1024.8 575.4 L1030 575.4" stroke="#73bf69" stroke-width="1" fill="none" stroke-linejoin="round"/>
<rect x="546" y="674.5" width="13" height="4" rx="2" fill="#73bf69"/>
<text x="573" y="680" font-size="12" text-anchor="start" fill="#ccccdc" font-weight="normal" letter-spacing="0.2">Agent_DESKTOP-A7QNM1A</text>
<rect x="749.5" y="674.5" width="13" height="4" rx="2" fill="#eab839"/>
<text x="777" y="680" font-size="12" text-anchor="start" fill="#8e8e99" font-weight="normal" letter-spacing="0.2">MainServer_WIN-T8P21U5MM1J</text>
<path d="M1097 468.5H1577M1097 507.5H1577M1097 547.5H1577M1097 586.5H1577M1097 626.5H1577M1097 665.5H1577M1118.5 448V665M1197.5 448V665M1276.5 448V665M1355.5 448V665M1435.5 448V665M1514.5 448V665" stroke="#404247" stroke-width="1" fill="none"/>
<text x="1090.5" y="471.4" font-size="12.5" text-anchor="end" fill="#ccccdc" font-weight="normal" letter-spacing="0.3">1</text>
<text x="1090.5" y="510.9" font-size="12.5" text-anchor="end" fill="#ccccdc" font-weight="normal" letter-spacing="0.3">0.8</text>
<text x="1090.5" y="550.4" font-size="12.5" text-anchor="end" fill="#ccccdc" font-weight="normal" letter-spacing="0.3">0.6</text>
<text x="1090.5" y="589.9" font-size="12.5" text-anchor="end" fill="#ccccdc" font-weight="normal" letter-spacing="0.3">0.4</text>
<text x="1090.5" y="629.4" font-size="12.5" text-anchor="end" fill="#ccccdc" font-weight="normal" letter-spacing="0.3">0.2</text>
<text x="1090.5" y="668.9" font-size="12.5" text-anchor="end" fill="#ccccdc" font-weight="normal" letter-spacing="0.3">0</text>
<text x="1118" y="683.5" font-size="12.5" text-anchor="middle" fill="#ccccdc" font-weight="normal" letter-spacing="0.3">13:30</text>
<text x="1197.2" y="683.5" font-size="12.5" text-anchor="middle" fill="#ccccdc" font-weight="normal" letter-spacing="0.3">13:40</text>
<text x="1276.5" y="683.5" font-size="12.5" text-anchor="middle" fill="#ccccdc" font-weight="normal" letter-spacing="0.3">13:50</text>
<text x="1355.8" y="683.5" font-size="12.5" text-anchor="middle" fill="#ccccdc" font-weight="normal" letter-spacing="0.3">14:00</text>
<text x="1435" y="683.5" font-size="12.5" text-anchor="middle" fill="#ccccdc" font-weight="normal" letter-spacing="0.3">14:10</text>
<text x="1514.2" y="683.5" font-size="12.5" text-anchor="middle" fill="#ccccdc" font-weight="normal" letter-spacing="0.3">14:20</text>
<path d="M1100 665.5H1577" stroke="#ff7a2a" stroke-width="1.5"/>
<path d="M1162 665.5H1193 M1399 665.5H1437" stroke="#c4162a" stroke-width="1.5" stroke-dasharray="1 1"/>
<path d="M1193.4 665.5L1195.5 468L1197.9 665.5" stroke="#b877d9" stroke-width="1.2" fill="none"/>
<path d="M1282.3 665.5L1284.4 468L1286.8 665.5" stroke="#5794f2" stroke-width="1.2" fill="none"/>
<path d="M1636 448.5H1883M1636 491.5H1883M1636 535.5H1883M1636 578.5H1883M1636 622.5H1883M1636 665.5H1883M1649.5 448V665M1710.5 448V665M1770.5 448V665M1831.5 448V665" stroke="#404247" stroke-width="1" fill="none"/>
<text x="1630.5" y="451.9" font-size="12.5" text-anchor="end" fill="#ccccdc" font-weight="normal" letter-spacing="0.3">100</text>
<text x="1630.5" y="495.3" font-size="12.5" text-anchor="end" fill="#ccccdc" font-weight="normal" letter-spacing="0.3">80</text>
<text x="1630.5" y="538.7" font-size="12.5" text-anchor="end" fill="#ccccdc" font-weight="normal" letter-spacing="0.3">60</text>
<text x="1630.5" y="582.1" font-size="12.5" text-anchor="end" fill="#ccccdc" font-weight="normal" letter-spacing="0.3">40</text>
<text x="1630.5" y="625.5" font-size="12.5" text-anchor="end" fill="#ccccdc" font-weight="normal" letter-spacing="0.3">20</text>
<text x="1630.5" y="668.9" font-size="12.5" text-anchor="end" fill="#ccccdc" font-weight="normal" letter-spacing="0.3">0</text>
<text x="1649.3" y="683.5" font-size="12.5" text-anchor="middle" fill="#ccccdc" font-weight="normal" letter-spacing="0.3">13:30</text>
<text x="1710" y="683.5" font-size="12.5" text-anchor="middle" fill="#ccccdc" font-weight="normal" letter-spacing="0.3">13:45</text>
<text x="1770.7" y="683.5" font-size="12.5" text-anchor="middle" fill="#ccccdc" font-weight="normal" letter-spacing="0.3">14:00</text>
<text x="1831.4" y="683.5" font-size="12.5" text-anchor="middle" fill="#ccccdc" font-weight="normal" letter-spacing="0.3">14:15</text>
<path d="M1640 665.5H1884" stroke="#ff7a2a" stroke-width="1.5"/>
<path d="M1672 665.5H1690 M1794 665.5H1812" stroke="#c4162a" stroke-width="1.5"/>
<path d="M156 943.5H799M156 957.5H799M156 971.5H799M156 985.5H799M156 999.5H799M178.5 943V999M285.5 943V999M392.5 943V999M499.5 943V999M606.5 943V999M713.5 943V999" stroke="#404247" stroke-width="1" fill="none"/>
<text x="151.5" y="947.3" font-size="12.5" text-anchor="end" fill="#ccccdc" font-weight="normal" letter-spacing="0.3">1 ops/m</text>
<text x="151.5" y="961.3" font-size="12.5" text-anchor="end" fill="#ccccdc" font-weight="normal" letter-spacing="0.3">0.500 ops/m</text>
<text x="151.5" y="975.3" font-size="12.5" text-anchor="end" fill="#ccccdc" font-weight="normal" letter-spacing="0.3">0 ops/m</text>
<text x="151.5" y="989.3" font-size="12.5" text-anchor="end" fill="#ccccdc" font-weight="normal" letter-spacing="0.3">-0.500 ops/m</text>
<text x="151.5" y="1003.3" font-size="12.5" text-anchor="end" fill="#ccccdc" font-weight="normal" letter-spacing="0.3">-1 ops/m</text>
<text x="178.5" y="1017" font-size="12.5" text-anchor="middle" fill="#ccccdc" font-weight="normal" letter-spacing="0.3">13:30</text>
<text x="285.5" y="1017" font-size="12.5" text-anchor="middle" fill="#ccccdc" font-weight="normal" letter-spacing="0.3">13:40</text>
<text x="392.5" y="1017" font-size="12.5" text-anchor="middle" fill="#ccccdc" font-weight="normal" letter-spacing="0.3">13:50</text>
<text x="499.5" y="1017" font-size="12.5" text-anchor="middle" fill="#ccccdc" font-weight="normal" letter-spacing="0.3">14:00</text>
<text x="606.5" y="1017" font-size="12.5" text-anchor="middle" fill="#ccccdc" font-weight="normal" letter-spacing="0.3">14:10</text>
<text x="713.5" y="1017" font-size="12.5" text-anchor="middle" fill="#ccccdc" font-weight="normal" letter-spacing="0.3">14:20</text>
<text x="445" y="953.5" font-size="14" text-anchor="middle" fill="#ccccdc" font-weight="normal" letter-spacing="0.6">No data</text>
<text x="867.2" y="957.5" font-size="11" text-anchor="middle" fill="#f2495c" font-weight="bold" >10.4 GiB</text>
<text x="867.2" y="947" font-size="3.4" text-anchor="middle" fill="#b0b0bb">AnalyticsNotificationsDatabase</text>
<text x="931.7" y="957.5" font-size="11" text-anchor="middle" fill="#73bf69" font-weight="bold" >8.14 MiB</text>
<text x="931.7" y="947" font-size="3.4" text-anchor="middle" fill="#b0b0bb">DefinedFaces</text>
<text x="996.2" y="957.5" font-size="11" text-anchor="middle" fill="#f2495c" font-weight="bold" >105 MiB</text>
<text x="996.2" y="947" font-size="3.4" text-anchor="middle" fill="#b0b0bb">Events</text>
<text x="1060.7" y="957.5" font-size="11" text-anchor="middle" fill="#73bf69" font-weight="bold" >7.85 MiB</text>
<text x="1060.7" y="947" font-size="3.4" text-anchor="middle" fill="#b0b0bb">FaceInformation</text>
<text x="1125.2" y="957.5" font-size="11" text-anchor="middle" fill="#73bf69" font-weight="bold" >4.57 MiB</text>
<text x="1125.2" y="947" font-size="3.4" text-anchor="middle" fill="#b0b0bb">HeatMap</text>
<text x="1254.2" y="957.5" font-size="11" text-anchor="middle" fill="#f2495c" font-weight="bold" >5.92 GiB</text>
<text x="1254.2" y="947" font-size="3.4" text-anchor="middle" fill="#b0b0bb">LicensePlates</text>
<text x="1189.7" y="950.5" font-size="11" text-anchor="middle" fill="#73bf69" font-weight="bold" >4.54</text>
<text x="1189.7" y="963.5" font-size="11" text-anchor="middle" fill="#73bf69" font-weight="bold" >MiB</text>
<text x="1189.7" y="940.5" font-size="3.4" text-anchor="middle" fill="#b0b0bb">ImportantNotifications</text>
<text x="867.2" y="1013.5" font-size="11" text-anchor="middle" fill="#f2495c" font-weight="bold" >139 MiB</text>
<text x="867.2" y="1003.5" font-size="3.4" text-anchor="middle" fill="#b0b0bb">Motion</text>
<text x="931.7" y="1013.5" font-size="11" text-anchor="middle" fill="#73bf69" font-weight="bold" >27.6 MiB</text>
<text x="931.7" y="1003.5" font-size="3.4" text-anchor="middle" fill="#b0b0bb">Notifications</text>
<text x="996.2" y="1013.5" font-size="11" text-anchor="middle" fill="#f2495c" font-weight="bold" >1.92 GiB</text>
<text x="996.2" y="1003.5" font-size="3.4" text-anchor="middle" fill="#b0b0bb">ObjectInformation</text>
<text x="1060.7" y="1013.5" font-size="11" text-anchor="middle" fill="#f2495c" font-weight="bold" >1.71 GiB</text>
<text x="1060.7" y="1003.5" font-size="3.4" text-anchor="middle" fill="#b0b0bb">PersonInformation</text>
<text x="1125.2" y="1013.5" font-size="11" text-anchor="middle" fill="#73bf69" font-weight="bold" >32.2 MiB</text>
<text x="1125.2" y="1003.5" font-size="3.4" text-anchor="middle" fill="#b0b0bb">Vilap_NextWave_Notifications</text>
<text x="1189.7" y="1013.5" font-size="11" text-anchor="middle" fill="#73bf69" font-weight="bold" >1.11 MiB</text>
<text x="1189.7" y="1003.5" font-size="3.4" text-anchor="middle" fill="#b0b0bb">Vilap_NextWave_RuleEngine</text>
<text x="1254.2" y="1013.5" font-size="11" text-anchor="middle" fill="#f2495c" font-weight="bold" >582 MiB</text>
<text x="1254.2" y="1003.5" font-size="3.4" text-anchor="middle" fill="#b0b0bb">VehicleInformation</text>
<text x="1597" y="1006" font-size="18" text-anchor="middle" fill="#9d9da8" font-weight="normal" letter-spacing="0.8">No data</text>
<path d="M1064 833.5 L1068.5 833.5 L1070 843 L1071.5 833.5 L1084.8 833.5 L1085.5 873.7 L1087 833.5 L1088.5 873.7 L1090.3 842.8 L1092.2 873.7 L1094 842.8 L1095.8 873.7 L1097.7 842.8 L1099.5 873.7 L1101.3 842.8 L1103.2 883.5 L1105 842.8 L1106.9 873.7 L1108.7 842.8 L1110.5 873.7 L1112.4 842.8 L1114.2 873.7 L1116 842.8 L1117.9 873.7 L1119.7 842.8 L1121.5 883.5 L1123.4 842.8 L1125.2 873.7 L1127 842.8 L1128.9 873.7 L1130.7 842.8 L1132.5 873.7 L1134.4 842.8 L1136.2 873.7 L1138 842.8 L1139.9 873.7 L1141.7 842.8 L1143.6 873.7 L1145.4 842.8 L1147.2 873.7 L1149.1 842.8 L1150.9 873.7 L1152.7 842.8 L1154.6 883.5 L1156.4 842.8 L1158.2 873.7 L1160.1 842.8 L1161.9 873.7 L1163.7 842.8 L1165.6 873.7 L1167.4 842.8 L1169.2 873.7 L1171.1 842.8 L1172.9 883.5 L1174.7 842.8 L1176.6 873.7 L1178.4 842.8 L1180.3 873.7 L1182.1 842.8 L1183.9 873.7 L1185.8 842.8 L1187.6 873.7 L1189.4 842.8 L1191.3 873.7 L1193.1 842.8 L1194.9 873.7 L1196.8 842.8 L1198.6 873.7 L1200.4 842.8 L1202.3 873.7 L1204.1 842.8 L1205.9 883.5 L1207.8 842.8 L1209.6 873.7 L1211.4 842.8 L1213.3 873.7 L1215.1 842.8 L1217 873.7 L1218.8 842.8 L1220.6 873.7 L1222.5 842.8 L1224.3 883.5 L1226.1 842.8 L1228 873.7 L1229.8 842.8 L1231.6 873.7 L1233.5 842.8 L1235.3 873.7 L1237.1 842.8 L1239 873.7 L1240.8 842.8 L1242.6 873.7 L1244.5 842.8 L1246.3 873.7 L1248.1 842.8 L1250 873.7 L1251.8 842.8 L1253.7 873.7 L1255.5 842.8 L1257.3 873.7 L1259.2 842.8 L1261 873.7 L1262.8 842.8 L1264.7 873.7 L1266.5 842.8 L1268.3 873.7 L1270.2 842.8 L1272 873.7 L1273.8 842.8 L1275.7 883.5 L1277.5 842.8 L1279.3 873.7 L1281.2 842.8 L1283 873.7 L1283 884 L1064 884 Z" fill="#73bf69" fill-opacity="0.2"/>
<path d="M1064 833.5 L1068.5 833.5 L1070 843 L1071.5 833.5 L1084.8 833.5 L1085.5 873.7 L1087 833.5 L1088.5 873.7 L1090.3 842.8 L1092.2 873.7 L1094 842.8 L1095.8 873.7 L1097.7 842.8 L1099.5 873.7 L1101.3 842.8 L1103.2 883.5 L1105 842.8 L1106.9 873.7 L1108.7 842.8 L1110.5 873.7 L1112.4 842.8 L1114.2 873.7 L1116 842.8 L1117.9 873.7 L1119.7 842.8 L1121.5 883.5 L1123.4 842.8 L1125.2 873.7 L1127 842.8 L1128.9 873.7 L1130.7 842.8 L1132.5 873.7 L1134.4 842.8 L1136.2 873.7 L1138 842.8 L1139.9 873.7 L1141.7 842.8 L1143.6 873.7 L1145.4 842.8 L1147.2 873.7 L1149.1 842.8 L1150.9 873.7 L1152.7 842.8 L1154.6 883.5 L1156.4 842.8 L1158.2 873.7 L1160.1 842.8 L1161.9 873.7 L1163.7 842.8 L1165.6 873.7 L1167.4 842.8 L1169.2 873.7 L1171.1 842.8 L1172.9 883.5 L1174.7 842.8 L1176.6 873.7 L1178.4 842.8 L1180.3 873.7 L1182.1 842.8 L1183.9 873.7 L1185.8 842.8 L1187.6 873.7 L1189.4 842.8 L1191.3 873.7 L1193.1 842.8 L1194.9 873.7 L1196.8 842.8 L1198.6 873.7 L1200.4 842.8 L1202.3 873.7 L1204.1 842.8 L1205.9 883.5 L1207.8 842.8 L1209.6 873.7 L1211.4 842.8 L1213.3 873.7 L1215.1 842.8 L1217 873.7 L1218.8 842.8 L1220.6 873.7 L1222.5 842.8 L1224.3 883.5 L1226.1 842.8 L1228 873.7 L1229.8 842.8 L1231.6 873.7 L1233.5 842.8 L1235.3 873.7 L1237.1 842.8 L1239 873.7 L1240.8 842.8 L1242.6 873.7 L1244.5 842.8 L1246.3 873.7 L1248.1 842.8 L1250 873.7 L1251.8 842.8 L1253.7 873.7 L1255.5 842.8 L1257.3 873.7 L1259.2 842.8 L1261 873.7 L1262.8 842.8 L1264.7 873.7 L1266.5 842.8 L1268.3 873.7 L1270.2 842.8 L1272 873.7 L1273.8 842.8 L1275.7 883.5 L1277.5 842.8 L1279.3 873.7 L1281.2 842.8 L1283 873.7" stroke="#73bf69" stroke-width="1" fill="none" stroke-opacity="0.9"/>
<text x="1177" y="846" font-size="50" text-anchor="middle" fill="#73bf69" stroke="#73bf69" stroke-width="1.1" letter-spacing="4">53</text>
</svg>
<div class="a" style="left:66px;top:774px;width:251px;height:110px;background:linear-gradient(120deg,#548b49,#79ab5e);border-radius:2px"></div>
<div class="a" style="left:77px;top:782.5px;width:200px;font-size:3.3px;line-height:3.5px;color:rgba(240,248,240,0.85);word-break:break-all">{Ray_NextWave_NotifyDB_Status{ServiceDisplayName="NotifyIdentificationDatabase", ServiceType="Database", __name__="Ray_NextWave_NotifyDB_Status", instance="localhost:9182", job="prometheus"}</div>
<div class="a" style="left:66px;top:791px;width:251px;text-align:center;color:#f7f8fa;line-height:80px;white-space:nowrap"><span style="font-size:72px;letter-spacing:2px;-webkit-text-stroke:1.2px #f7f8fa">100</span><span style="display:inline-block;margin-left:1px;margin-right:-6px;font-size:44px;transform:scaleX(0.75);transform-origin:0 0;-webkit-text-stroke:1.7px #f7f8fa">%</span></div>
<div class="a" style="left:320px;top:774px;width:250px;height:110px;background:linear-gradient(120deg,#548b49,#79ab5e);border-radius:2px"></div>
<div class="a" style="left:331px;top:782.5px;width:200px;font-size:3.3px;line-height:3.5px;color:rgba(240,248,240,0.85);word-break:break-all">{Ray_NextWave_NotifyDB_Status{ServiceDisplayName="NotifyIdentificationDatabase", ServiceType="Database", __name__="Ray_NextWave_NotifyDB_Status", instance="localhost:9182", job="prometheus"}</div>
<div class="a" style="left:320px;top:791px;width:250px;text-align:center;color:#f7f8fa;line-height:80px;white-space:nowrap"><span style="font-size:72px;letter-spacing:2px;-webkit-text-stroke:1.2px #f7f8fa">100</span><span style="display:inline-block;margin-left:1px;margin-right:-6px;font-size:44px;transform:scaleX(0.75);transform-origin:0 0;-webkit-text-stroke:1.7px #f7f8fa">%</span></div>
<div class="a" style="left:573px;top:774px;width:251px;height:110px;background:linear-gradient(120deg,#548b49,#79ab5e);border-radius:2px"></div>
<div class="a" style="left:584px;top:782.5px;width:228px;font-size:3.3px;line-height:3.5px;color:rgba(240,248,240,0.85);word-break:break-all">{Ray_NextWave_NotifyDB_Status{ServiceDisplayName="NotifyIdentificationDatabase", ServiceType="Database", __name__="Ray_NextWave_NotifyDB_Status", instance="localhost:9182", job="prometheus"}</div>
<div class="a" style="left:573px;top:791px;width:251px;text-align:center;color:#f7f8fa;line-height:80px;white-space:nowrap"><span style="font-size:72px;letter-spacing:2px;-webkit-text-stroke:1.2px #f7f8fa">100</span><span style="display:inline-block;margin-left:1px;margin-right:-6px;font-size:44px;transform:scaleX(0.75);transform-origin:0 0;-webkit-text-stroke:1.7px #f7f8fa">%</span></div>
<div class="a" style="left:834px;top:774px;width:220px;height:110px;background:linear-gradient(120deg,#4a9b47,#6cb558);border-radius:2px"></div>
<div class="a" style="left:832px;top:797px;width:220px;text-align:center;color:#f7f8fa;font-size:52px;letter-spacing:1px;line-height:64px;white-space:nowrap;-webkit-text-stroke:1.1px #f7f8fa">No data</div>
<svg style="left:0;top:0" width="1919" height="1029" viewBox="0 0 1919 1029">
<circle cx="25.5" cy="23.5" r="4.6" fill="#4a90d9"/>
<path d="M16.76 20.32 A9.3 9.3 0 0 1 34.24 20.32M34.24 26.68 A9.3 9.3 0 0 1 16.76 26.68M23.16 36.79 A13.5 13.5 0 0 1 20.88 10.81M30.12 10.81 A13.5 13.5 0 0 1 30.12 36.19" stroke="#6e6e6e" stroke-width="2.4" fill="none" stroke-linecap="round"/>
<path d="M35.35 62.53 L38.51 63.2 L38.51 66.4 L35.35 67.07 L33.93 70.51 L35.68 73.22 L33.42 75.48 L30.71 73.73 L27.27 75.15 L26.6 78.31 L23.4 78.31 L22.73 75.15 L19.29 73.73 L16.58 75.48 L14.32 73.22 L16.07 70.51 L14.65 67.07 L11.49 66.4 L11.49 63.2 L14.65 62.53 L16.07 59.09 L14.32 56.38 L16.58 54.12 L19.29 55.87 L22.73 54.45 L23.4 51.29 L26.6 51.29 L27.27 54.45 L30.71 55.87 L33.42 54.12 L35.68 56.38 L33.93 59.09Z" stroke="#bdbdbd" stroke-width="1.3" fill="none" stroke-linejoin="round" stroke-linecap="round"/>
<circle cx="25" cy="64.8" r="5.6" stroke="#bdbdbd" stroke-width="1.3" fill="none" stroke-linejoin="round" stroke-linecap="round"/>
<ellipse cx="25" cy="101.3" rx="2.8" ry="3.4" stroke="#bdbdbd" stroke-width="1.3" fill="none" stroke-linejoin="round" stroke-linecap="round"/>
<ellipse cx="17.2" cy="103" rx="2.3" ry="2.7" stroke="#bdbdbd" stroke-width="1.3" fill="none" stroke-linejoin="round" stroke-linecap="round"/>
<ellipse cx="32.7" cy="103" rx="2.3" ry="2.7" stroke="#bdbdbd" stroke-width="1.3" fill="none" stroke-linejoin="round" stroke-linecap="round"/>
<path d="M19.3 115.5 C19 109 21.5 106.8 25 106.8 C28.5 106.8 31 109 30.7 115.5 Z" stroke="#bdbdbd" stroke-width="1.3" fill="none" stroke-linejoin="round" stroke-linecap="round"/>
<path d="M19.5 107.5 C16 106.8 11.8 108 11.8 112.5 C11.8 115.5 14 115.5 19.3 115.5 M30.5 107.5 C34 106.8 38.2 108 38.2 112.5 C38.2 115.5 36 115.5 30.7 115.5" stroke="#bdbdbd" stroke-width="1.3" fill="none" stroke-linejoin="round" stroke-linecap="round"/>
<rect x="11.3" y="138.3" width="27.5" height="22.3" rx="1.5" stroke="#bdbdbd" stroke-width="1.3" fill="none" stroke-linejoin="round" stroke-linecap="round"/>
<path d="M11.3 143.9H38.8" stroke="#bdbdbd" stroke-width="1.8"/>
<ellipse cx="17.5" cy="138.4" rx="1.2" ry="3" stroke="#bdbdbd" stroke-width="1.3" fill="none" stroke-linejoin="round" stroke-linecap="round" fill="#212121"/>
<ellipse cx="25" cy="138.4" rx="1.2" ry="3" stroke="#bdbdbd" stroke-width="1.3" fill="none" stroke-linejoin="round" stroke-linecap="round" fill="#212121"/>
<ellipse cx="32.5" cy="138.4" rx="1.2" ry="3" stroke="#bdbdbd" stroke-width="1.3" fill="none" stroke-linejoin="round" stroke-linecap="round" fill="#212121"/>
<rect x="15.1" y="147.1" width="3.2" height="2.4" rx="0.8" stroke="#bdbdbd" stroke-width="1" fill="none"/>
<rect x="20.6" y="147.1" width="3.2" height="2.4" rx="0.8" stroke="#bdbdbd" stroke-width="1" fill="none"/>
<rect x="26.1" y="147.1" width="3.2" height="2.4" rx="0.8" stroke="#bdbdbd" stroke-width="1" fill="none"/>
<rect x="31.4" y="147.1" width="3.2" height="2.4" rx="0.8" stroke="#bdbdbd" stroke-width="1" fill="none"/>
<rect x="15.1" y="151.4" width="3.2" height="2.4" rx="0.8" stroke="#bdbdbd" stroke-width="1" fill="none"/>
<rect x="20.6" y="151.4" width="3.2" height="2.4" rx="0.8" stroke="#bdbdbd" stroke-width="1" fill="none"/>
<rect x="26.1" y="151.4" width="3.2" height="2.4" rx="0.8" stroke="#bdbdbd" stroke-width="1" fill="none"/>
<rect x="15.1" y="155.6" width="3.2" height="2.4" rx="0.8" stroke="#bdbdbd" stroke-width="1" fill="none"/>
<rect x="20.6" y="155.6" width="3.2" height="2.4" rx="0.8" stroke="#bdbdbd" stroke-width="1" fill="none"/>
<circle cx="33" cy="156.8" r="5.8" stroke="#bdbdbd" stroke-width="1.3" fill="#212121"/>
<path d="M30.3 156.8 L32.3 158.8 L35.8 154.8" stroke="#bdbdbd" stroke-width="1.3" fill="none" stroke-linejoin="round" stroke-linecap="round"/>
<path d="M11.2 205.9V182L25.6 177.5V205.9Z M25.6 184L36.9 188.4V197" stroke="#bdbdbd" stroke-width="1.3" fill="none" stroke-linejoin="round" stroke-linecap="round"/>
<path d="M11.2 205.9H28" stroke="#bdbdbd" stroke-width="1.3" fill="none" stroke-linejoin="round" stroke-linecap="round"/>
<path d="M15.3 184.5V187.5M15.3 192.0V195.0M15.3 199.5V202.5M21.3 184.5V187.5M21.3 192.0V195.0M21.3 199.5V202.5M28.8 192V195M32.6 192V195" stroke="#bdbdbd" stroke-width="1.5" stroke-linecap="round"/>
<path d="M37.2 201.88 L38.76 202.12 L38.76 203.48 L37.2 203.72 L36.62 205.12 L37.55 206.39 L36.59 207.35 L35.32 206.42 L33.92 207 L33.68 208.56 L32.32 208.56 L32.08 207 L30.68 206.42 L29.41 207.35 L28.45 206.39 L29.38 205.12 L28.8 203.72 L27.24 203.48 L27.24 202.12 L28.8 201.88 L29.38 200.48 L28.45 199.21 L29.41 198.25 L30.68 199.18 L32.08 198.6 L32.32 197.04 L33.68 197.04 L33.92 198.6 L35.32 199.18 L36.59 198.25 L37.55 199.21 L36.62 200.48Z" stroke="#bdbdbd" stroke-width="1.1" fill="#212121" stroke-linejoin="round"/>
<circle cx="33" cy="202.8" r="2" stroke="#bdbdbd" stroke-width="1" fill="none"/>
<rect x="11.3" y="228.3" width="27.5" height="19.3" rx="2" stroke="#bdbdbd" stroke-width="1.3" fill="none" stroke-linejoin="round" stroke-linecap="round"/>
<circle cx="18.6" cy="235.3" r="2.3" stroke="#bdbdbd" stroke-width="1.3" fill="none" stroke-linejoin="round" stroke-linecap="round"/>
<path d="M14.6 242.6 C14.6 239.5 16.5 238.3 18.6 238.3 C20.7 238.3 22.6 239.5 22.6 242.6Z" stroke="#bdbdbd" stroke-width="1.3" fill="none" stroke-linejoin="round" stroke-linecap="round"/>
<rect x="25.4" y="233.2" width="10.4" height="9.4" fill="#8a8a8a"/>
<path d="M25.4 236.3H35.8 M25.4 239.4H35.8" stroke="#6a6a6a" stroke-width="0.7"/>
<path d="M17.37 271.33 A12.4 12.4 0 1 1 12.87 278.52" stroke="#bdbdbd" stroke-width="1.3" fill="none" stroke-linejoin="round" stroke-linecap="round"/>
<path d="M15.3 267.8 L15.8 272.3 L20.3 272" stroke="#bdbdbd" stroke-width="1.3" fill="none" stroke-linejoin="round" stroke-linecap="round"/>
<path d="M25 272.5V281.2H31.7" stroke="#bdbdbd" stroke-width="1.5" fill="none" stroke-linejoin="miter"/>
<circle cx="25" cy="323" r="13.7" stroke="#bdbdbd" stroke-width="1.3" fill="none" stroke-linejoin="round" stroke-linecap="round"/>
<path d="M25 332.8 C22 328 18.8 323.5 18.8 319.6 C18.8 315.5 21.5 313.1 25 313.1 C28.5 313.1 31.2 315.5 31.2 319.6 C31.2 323.5 28 328 25 332.8Z" stroke="#bdbdbd" stroke-width="1.3" fill="none" stroke-linejoin="round" stroke-linecap="round"/>
<circle cx="25" cy="318.4" r="1.2" fill="#bdbdbd"/>
<path d="M37.11 330.71 L38.37 330.92 L38.37 332.08 L37.11 332.29 L36.62 333.49 L37.35 334.53 L36.53 335.35 L35.49 334.62 L34.29 335.11 L34.08 336.37 L32.92 336.37 L32.71 335.11 L31.51 334.62 L30.47 335.35 L29.65 334.53 L30.38 333.49 L29.89 332.29 L28.63 332.08 L28.63 330.92 L29.89 330.71 L30.38 329.51 L29.65 328.47 L30.47 327.65 L31.51 328.38 L32.71 327.89 L32.92 326.63 L34.08 326.63 L34.29 327.89 L35.49 328.38 L36.53 327.65 L37.35 328.47 L36.62 329.51Z" stroke="#bdbdbd" stroke-width="1.1" fill="#212121" stroke-linejoin="round"/>
<circle cx="33.5" cy="331.5" r="1.6" stroke="#bdbdbd" stroke-width="1" fill="none"/>
<rect x="11.4" y="353.5" width="27.2" height="24.9" rx="1.8" stroke="#bdbdbd" stroke-width="1.3" fill="none" stroke-linejoin="round" stroke-linecap="round"/>
<rect x="17.4" y="351.8" width="15.4" height="5.6" rx="2.5" stroke="#bdbdbd" stroke-width="1.3" fill="none" stroke-linejoin="round" stroke-linecap="round" fill="#212121"/>
<path d="M15.3 362.6 L17.5 364.8 L21.8 360.5 M16.3 368.5 L20.8 373 M20.8 368.5 L16.3 373" stroke="#bdbdbd" stroke-width="1.3" fill="none" stroke-linejoin="round" stroke-linecap="round"/>
<path d="M23.8 360.2H35.2V363.2H30.5V366H23.8Z M23.8 368H35.2V371.5H30.5V373.8H23.8Z" fill="#8a8a8a"/>
<circle cx="25" cy="407.1" r="13.7" stroke="#bdbdbd" stroke-width="1.3" fill="none" stroke-linejoin="round" stroke-linecap="round"/>
<path d="M16.1 407.8H23L24.3 411L26.5 403L27.9 407.8H34.8" stroke="#bdbdbd" stroke-width="1.3" fill="none" stroke-linejoin="round" stroke-linecap="round"/>
<rect x="46" y="386.2" width="3" height="41.8" rx="1.5" fill="#1f6fe0"/>
<path d="M16.1 441.7H34M16.1 447.5H34M16.1 453.4H28.1" stroke="#c6c6c6" stroke-width="3"/>
<path d="M36.3 451 L37.83 454.7 L41.82 455.01 L38.77 457.6 L39.71 461.49 L36.3 459.4 L32.89 461.49 L33.83 457.6 L30.78 455.01 L34.77 454.7Z" fill="#c6c6c6"/>
<rect x="14.5" y="995" width="24" height="22.5" stroke="#bdbdbd" stroke-width="1.8" fill="none"/>
<path d="M14.5 999.6H38.5" stroke="#bdbdbd" stroke-width="1.8"/>
<path d="M20.8 993.5V997.5M32 993.5V997.5" stroke="#bdbdbd" stroke-width="1.6"/>
<path d="M18.5 1006.9H21M23 1006.9H25M27.5 1006.9H33M18.5 1011.5H28M31.5 1011.5H33.5" stroke="#bdbdbd" stroke-width="2"/>
<path d="M1476 13.5 L1484.5 17 V25 C1484.5 30 1480.5 33 1476 34.8 C1471.5 33 1467.5 30 1467.5 25 V17 Z" stroke="#b8922e" stroke-width="1.6" fill="none" stroke-linejoin="round"/>
<path d="M1472.5 24 L1475 26.5 L1479.5 22" stroke="#b8922e" stroke-width="1.6" fill="none" stroke-linecap="round" stroke-linejoin="round"/>
<path d="M1512 18.5 H1508.5 C1507.7 18.5 1507 19.2 1507 20 V33 C1507 33.8 1507.7 34.5 1508.5 34.5 H1523.5 C1524.3 34.5 1525 33.8 1525 33 V19.5 C1525 18.8 1524.5 18.5 1524 18.5 H1520" stroke="#bdbdbd" stroke-width="1.5" fill="none" stroke-linejoin="round"/>
<path d="M1512.3 19.8 V17.6 L1514.8 16.2 C1515 14.8 1515.8 14 1516.5 14 C1517.2 14 1518 14.8 1518.2 16.2 L1520.7 17.6 V19.8 Z" stroke="#bdbdbd" stroke-width="1.5" fill="#212121" stroke-linejoin="round"/>
<path d="M1519.5 31.5 L1527.8 23.3 M1521 32.8 L1529 24.8 M1519.5 31.5 L1519 33.8 L1521 32.8" stroke="#bdbdbd" stroke-width="1.2" fill="#212121" stroke-linejoin="round"/>
<circle cx="1556" cy="18.6" r="4.6" stroke="#bdbdbd" stroke-width="1.6" fill="none"/>
<path d="M1549.2 33.8 C1548.5 33.8 1548.2 33.3 1548.2 32.5 C1548.2 27.5 1551.5 24.8 1556 24.8 C1560.5 24.8 1563.8 27.5 1563.8 32.5 C1563.8 33.3 1563.5 33.8 1562.8 33.8 Z" stroke="#bdbdbd" stroke-width="1.6" fill="none"/>
<rect x="1583.5" y="16.3" width="20.5" height="15.2" rx="0.8" stroke="#bdbdbd" stroke-width="1.6" fill="none"/>
<path d="M1584 17 L1593.75 26 L1603.5 17" stroke="#bdbdbd" stroke-width="1.6" fill="none" stroke-linejoin="round"/>
<circle cx="1610.2" cy="33" r="7.4" fill="#a9151b"/>
<text x="1610.2" y="36.8" font-size="10" font-weight="bold" fill="#ffffff" text-anchor="middle">9</text>
<path d="M1826.5 23.5H1839.5" stroke="#d8d8d8" stroke-width="1.5"/>
<rect x="1859.5" y="19.5" width="11" height="11" stroke="#d8d8d8" stroke-width="1.3" fill="none"/>
<path d="M1861.5 19.5V17.3H1872.8V28.3H1870.5" stroke="#d8d8d8" stroke-width="1.3" fill="none"/>
<path d="M1893 17L1906 30M1906 17L1893 30" stroke="#d8d8d8" stroke-width="1.4"/>
</svg>
<div class="a" style="left:1643px;top:16px;font-size:12px;color:#d4d4d4;line-height:16px;white-space:nowrap">13:28:15 1404/06/30 <span dir="rtl">یکشنبه</span></div>
</body></html>
